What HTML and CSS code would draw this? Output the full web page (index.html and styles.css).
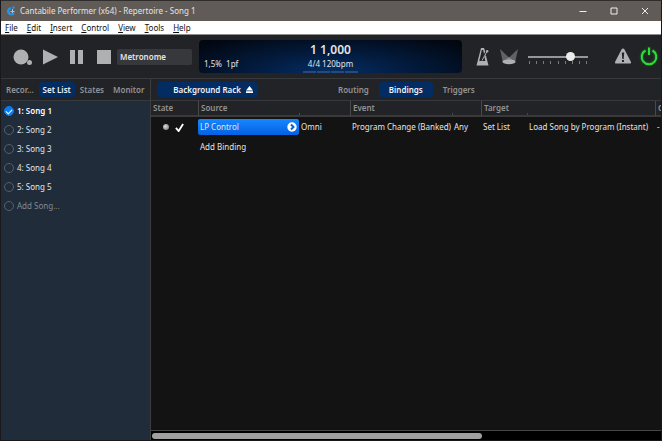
FILE: index.html
```
<!DOCTYPE html>
<html lang="en">
<head>
    <meta charset="UTF-8">
    <meta name="viewport" content="width=device-width, initial-scale=1.0">
    <title>Cantabile Performer</title>
    <link rel="stylesheet" href="styles.css">
</head>
<body>
    <header class="titlebar">
        <svg class="logo" viewBox="0 0 10 10"><path d="M5 1A4.300 4.300 0 1 0 9 7.500L7 6.500A2 2 0 1 1 5 3.300z" fill="#2494e8"/><path d="M4.500 5.500h4M6.500 3v4" fill="none" stroke="#8fd0ff"/><circle cx="7.500" cy="1.500" r="1.200" fill="#2494e8"/></svg>
        <h1>Cantabile Performer (x64) - Repertoire - Song 1</h1>
        <button class="window-btn" aria-label="Minimize"><svg viewBox="0 0 8 8"><path d="M0.500 4.500h7"/></svg></button>
        <button class="window-btn" aria-label="Maximize"><svg viewBox="0 0 8 8"><path d="M1 1h6v6H1z"/></svg></button>
        <button class="window-btn" aria-label="Close"><svg viewBox="0 0 8 8"><path d="M1 1l6 6M7 1L1 7"/></svg></button>
    </header>
    <nav class="menubar">
        <button><u>F</u>ile</button>
        <button><u>E</u>dit</button>
        <button><u>I</u>nsert</button>
        <button><u>C</u>ontrol</button>
        <button><u>V</u>iew</button>
        <button><u>T</u>ools</button>
        <button><u>H</u>elp</button>
    </nav>
    <div class="toolbar">
        <div class="transport">
            <button aria-label="Record"><svg viewBox="0 0 20 18"><circle cx="8" cy="9" r="7.500"/><circle cx="16.500" cy="14.500" r="2.500"/></svg></button>
            <button aria-label="Play"><svg viewBox="0 0 20 18"><path d="M3 1.500v15L18 9z"/></svg></button>
            <button aria-label="Pause"><svg viewBox="0 0 20 18"><path d="M3 2h5v14H3zM11 2h5v14h-5z"/></svg></button>
            <button aria-label="Stop"><svg viewBox="0 0 20 18"><path d="M3 2h14v14H3z"/></svg></button>
        </div>
        <button class="metronome">Metronome</button>
        <div class="display">
            <strong>1 1,000</strong>
            <div class="display-row">
                <span>1,5%&nbsp; 1pf</span>
                <span>4/4 120bpm</span>
                <span></span>
            </div>
            <div class="beats"><i></i><i></i><i></i><i></i></div>
        </div>
        <div class="tools">
            <button aria-label="Metronome sound"><svg viewBox="0 0 18 20"><path d="M8 1h3l1.300 3.500L11 7l-.800-4H8.800L6.300 14h6l-.800-4 1.300-2L15.500 18.500H3.500z"/><path d="M9 13.500l5-9" fill="none" stroke="#aeb0b2"/><circle cx="14.200" cy="4.300" r="1.200"/></svg></button>
            <button aria-label="Lights"><svg viewBox="0 0 18 20"><path d="M0 2l12.500 12L3 16z" fill="#606264"/><path d="M18 2L5.500 14l9.500 2z" fill="#606264"/><path d="M9 10l6 5H3z" fill="#85878a"/><ellipse cx="9" cy="14.800" rx="6.500" ry="2.400"/></svg></button>
        </div>
        <div class="volume">
            <input type="range" min="0" max="100" value="75" aria-label="Volume">
            <div class="ticks"><i></i><i></i><i></i><i></i><i></i><i></i><i></i><i></i><i></i></div>
        </div>
        <div class="status">
            <button aria-label="Panic"><svg viewBox="0 0 18 20"><path fill-rule="evenodd" d="M9 1.500Q10 1.500 10.500 2.500L17 15Q17.500 16.500 16 16.500H2Q.500 16.500 1 15L7.500 2.500Q8 1.500 9 1.500zM7.800 5.500L8.300 12h1.400l.500-6.500zM8 13v2h2v-2z"/></svg></button>
            <button class="power" aria-label="Power"><svg viewBox="0 0 18 20"><path d="M5.500 3.500a7.300 7.300 0 1 0 7 0M9 .500V8"/></svg></button>
        </div>
    </div>
    <div class="workspace">
        <aside class="sidebar">
            <div class="tabs">
                <button>Recor...</button>
                <button class="active">Set List</button>
                <button>States</button>
                <button>Monitor</button>
            </div>
            <div class="songs">
                <label class="current"><input type="radio" name="song" checked>1: Song 1</label>
                <label><input type="radio" name="song">2: Song 2</label>
                <label><input type="radio" name="song">3: Song 3</label>
                <label><input type="radio" name="song">4: Song 4</label>
                <label><input type="radio" name="song">5: Song 5</label>
                <label class="add"><input type="radio" name="song">Add Song...</label>
            </div>
        </aside>
        <main class="main">
            <div class="rack-bar">
                <button class="rack">Background Rack <svg viewBox="0 0 8 8"><path d="M4 0l4 5H0zM0 6h8v2H0z"/></svg></button>
                <div class="views">
                    <button>Routing</button>
                    <button class="active">Bindings</button>
                    <button>Triggers</button>
                </div>
            </div>
            <div class="bindings">
                <table>
                    <colgroup>
                        <col class="c-state"><col class="c-source"><col class="c-channel"><col class="c-event"><col class="c-number"><col class="c-target"><col class="c-action"><col class="c-options">
                    </colgroup>
                    <thead>
                        <tr>
                            <th>State</th>
                            <th class="split">Source</th>
                            <th class="tick"></th>
                            <th class="split">Event</th>
                            <th class="tick"></th>
                            <th class="split">Target</th>
                            <th class="tick"></th>
                            <th class="split">C</th>
                        </tr>
                    </thead>
                    <tbody>
                        <tr>
                            <td><div class="state"><span class="led"></span><svg viewBox="0 0 10 10"><path d="M1 5.500L4 9l5-8"/></svg></div></td>
                            <td class="source"><button class="port">LP Control <svg viewBox="0 0 10 10"><circle cx="5" cy="5" r="4.700"/><path d="M4 2.500L6.500 5 4 7.500"/></svg></button></td>
                            <td>Omni</td>
                            <td>Program Change (Banked)</td>
                            <td>Any</td>
                            <td>Set List</td>
                            <td>Load Song by Program (Instant)</td>
                            <td>-</td>
                        </tr>
                        <tr>
                            <td></td>
                            <td colspan="7">Add Binding</td>
                        </tr>
                    </tbody>
                </table>
            </div>
            <div class="scrollbar"><div class="thumb"></div></div>
        </main>
    </div>
</body>
</html>
```
FILE: styles.css
```
* {
    box-sizing: border-box;
}
body {
    margin: 0;
    height: 100vh;
    display: flex;
    flex-direction: column;
    overflow: hidden;
    border: 1px solid #19191b;
    border-top-color: #302e2d;
    background: #222326;
    color: #e4e4e4;
    font: 8px/12px "Noto Sans", sans-serif;
}
button {
    padding: 0;
    border: 0;
    background: none;
    color: inherit;
    font: inherit;
    white-space: nowrap;
}
svg {
    display: block;
    fill: #aeb0b2;
}
/* Title bar and menu */
.titlebar {
    display: flex;
    align-items: center;
    flex: none;
    height: 20px;
    padding: 0 1px 0 5px;
    background: #605b57;
}
.titlebar h1 {
    flex: 1;
    margin: 0;
    font-size: 8px;
    font-weight: normal;
}
.logo {
    width: 10px;
    height: 10px;
    margin-right: 4px;
}
.window-btn {
    display: flex;
    justify-content: center;
    width: 31px;
}
.window-btn svg {
    width: 8px;
    height: 8px;
    fill: none;
    stroke: #eee;
}
.menubar {
    display: flex;
    flex: none;
    gap: 9px;
    height: 14px;
    padding-left: 4px;
    border-bottom: 1px solid #8c8d8e;
    background: #fff;
    color: #111;
}
/* Transport toolbar */
.toolbar {
    display: flex;
    align-items: center;
    flex: none;
    height: 44px;
    border-bottom: 1px solid #38393c;
}
.transport {
    display: flex;
    gap: 7px;
    padding-left: 12px;
}
.transport svg {
    width: 20px;
    height: 18px;
}
.metronome {
    width: 75px;
    height: 16px;
    margin-left: 3px;
    padding-left: 3px;
    border-radius: 2px;
    background: #37383b;
    font-weight: 600;
    text-align: left;
}
.display {
    flex: 1;
    display: flex;
    flex-direction: column;
    align-items: center;
    height: 33px;
    margin-left: 7px;
    padding-top: 3px;
    border-radius: 4px;
    background: radial-gradient(ellipse at 50% 100%, #052e66 0%, #031c40 40%, #020a17 85%, #02060d 100%);
}
.display strong {
    font-size: 12px;
    line-height: 14px;
    font-weight: 600;
}
.display-row {
    display: grid;
    grid-template-columns: 1fr auto 1fr;
    width: 100%;
    padding: 0 5px;
    line-height: 14px;
}
.beats {
    display: grid;
    grid-template-columns: repeat(4, 13px);
    gap: 1px;
    height: 2px;
}
.beats i {
    background: #274a78;
}
.tools {
    display: flex;
    gap: 9px;
    margin-left: 11px;
}
.tools svg,
.status svg {
    width: 18px;
    height: 20px;
}
.volume {
    width: 60px;
    margin-left: 10px;
    padding-top: 3px;
}
.volume input {
    display: block;
    appearance: none;
    width: 100%;
    height: 8px;
    margin: 0;
    background: linear-gradient(#95979a, #95979a) center / 100% 2px no-repeat;
}
.volume input::-webkit-slider-thumb {
    appearance: none;
    width: 9px;
    height: 9px;
    border-radius: 50%;
    background: #ececec;
}
.ticks {
    display: flex;
    justify-content: space-between;
    padding: 0 1px;
}
.ticks i {
    width: 1px;
    height: 3px;
    background: #77797b;
}
.status {
    display: flex;
    gap: 8px;
    margin: 0 3px 0 26px;
}
.power path {
    fill: none;
    stroke: #2fdc3c;
    stroke-width: 2;
}
.power svg {
    filter: drop-shadow(0 0 1px #128a1c);
}
/* Workspace */
.workspace {
    display: flex;
    flex: 1;
    min-height: 0;
}
.sidebar {
    display: flex;
    flex-direction: column;
    width: 150px;
    border-right: 1px solid #3c3d40;
}
.tabs {
    display: flex;
    align-items: center;
    gap: 1px;
    height: 22px;
    padding-left: 1px;
    border-bottom: 1px solid #38393c;
    color: #929396;
    font-weight: 600;
}
.tabs button,
.views button {
    height: 15px;
    padding: 0 4px;
    border-radius: 3px;
}
.tabs .active,
.views .active,
.rack {
    background: #032c62;
    color: #f0f4fa;
}
.songs {
    flex: 1;
    background: #202c3a;
}
.songs label {
    display: flex;
    align-items: center;
    gap: 3px;
    height: 19px;
    padding-left: 3px;
}
.songs .current {
    color: #fff;
    font-weight: 600;
}
.songs .add {
    color: #84898f;
}
.songs input {
    appearance: none;
    width: 10px;
    height: 10px;
    margin: 0;
    border: 1px solid #56606b;
    border-radius: 50%;
}
.songs input:checked {
    display: flex;
    align-items: center;
    justify-content: center;
    border-color: #087bf0;
    background: #087bf0;
}
.songs input:checked::before {
    content: "";
    width: 5px;
    height: 3px;
    border: solid #fff;
    border-width: 0 0 1px 1px;
    transform: rotate(-45deg);
}
.main {
    flex: 1;
    display: flex;
    flex-direction: column;
    min-width: 0;
    background: #131313;
}
.rack-bar {
    display: flex;
    align-items: center;
    flex: none;
    height: 22px;
    padding-left: 6px;
    border-bottom: 1px solid #38393c;
    background: #222326;
    font-weight: 600;
}
.rack {
    display: flex;
    align-items: center;
    justify-content: flex-end;
    gap: 5px;
    width: 101px;
    height: 15px;
    padding-right: 5px;
    border-radius: 3px;
}
.rack svg {
    width: 7px;
    height: 7px;
    fill: #fff;
}
.views {
    display: flex;
    gap: 6px;
    margin-left: 76px;
    color: #929396;
}
.views .active {
    padding: 0 10px;
}
/* Bindings table */
.bindings {
    flex: 1;
    overflow: hidden;
}
.bindings table {
    width: 100%;
    table-layout: fixed;
    border-collapse: separate;
    border-spacing: 0;
}
.c-state {
    width: 47px;
}
.c-source {
    width: 101px;
}
.c-channel {
    width: 51px;
}
.c-event {
    width: 102px;
}
.c-number {
    width: 29px;
}
.c-target {
    width: 46px;
}
.c-action {
    width: 128px;
}
.bindings th {
    height: 16px;
    padding: 0 2px;
    border-bottom: 2px solid #3a3a3a;
    background: #222326;
    color: #929396;
    font-weight: 600;
    text-align: left;
    overflow: hidden;
}
.bindings .split {
    border-left: 1px solid #48494b;
}
.bindings .tick {
    background: linear-gradient(#48494b, #48494b) left bottom / 1px 2px no-repeat #222326;
}
.bindings td {
    height: 20px;
    padding: 0 2px;
    white-space: nowrap;
}
.bindings .source {
    padding: 0;
}
.state {
    display: flex;
    align-items: center;
    gap: 6px;
    padding-left: 10px;
}
.state svg {
    width: 9px;
    height: 9px;
    fill: none;
    stroke: #fff;
    stroke-width: 2;
}
.led {
    width: 6px;
    height: 6px;
    border-radius: 50%;
    background: radial-gradient(circle at 40% 40%, #ddd, #666);
}
.port {
    display: flex;
    align-items: center;
    justify-content: space-between;
    width: 100%;
    height: 16px;
    padding: 0 2px;
    border-radius: 2px;
    background: linear-gradient(#1787ff, #0460e2);
}
.port svg {
    width: 10px;
    height: 10px;
    fill: #fff;
}
.port path {
    fill: none;
    stroke: #0a5fd4;
    stroke-width: 2;
}
.scrollbar {
    flex: none;
    height: 10px;
    padding: 2px 1px;
    border-top: 1px solid #454545;
    background: #000;
}
.thumb {
    width: 65%;
    height: 6px;
    border-radius: 3px;
    background: #a0a0a0;
}
```
